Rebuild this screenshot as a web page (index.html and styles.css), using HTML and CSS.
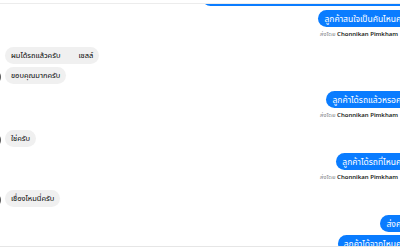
FILE: index.html
```html
<!DOCTYPE html>
<html>
<head lang="th">
    <meta charset="UTF-8">
    <title>แชท</title>
    <link rel="stylesheet" href="styles.css">
</head>
<body>
<div id="app">
    <div class="top"></div>
    <div class="thread">
        <div class="out">
            <div class="bubble blue first-cut">ลูกค้าสนใจรถรุ่นไหนเป็นพิเศษไหมคะ ทางเรามีหลายรุ่นเลยค่ะ</div>
            <div class="bubble blue m1">ลูกค้าสนใจเป็นคันไหนคะ</div>
            <div class="sent"><span class="lbl">ส่งโดย</span> <b>Chonnikan Pimkham</b></div>
        </div>

        <div class="in g1">
            <div class="row"><span class="avatar none"></span><div class="bubble grey">ผมได้รถแล้วครับ<span class="gap"></span>เซลล์</div></div>
            <div class="row"><span class="avatar"></span><div class="bubble grey">ขอบคุณมากครับ</div></div>
        </div>

        <div class="out g2">
            <div class="bubble blue">ลูกค้าได้รถแล้วหรอคะ</div>
            <div class="sent"><span class="lbl">ส่งโดย</span> <b>Chonnikan Pimkham</b></div>
        </div>

        <div class="in g3">
            <div class="row"><span class="avatar"></span><div class="bubble grey">ใช่ครับ</div></div>
        </div>

        <div class="out g4">
            <div class="bubble blue">ลูกค้าได้รถที่ไหนคะ</div>
            <div class="sent"><span class="lbl">ส่งโดย</span> <b>Chonnikan Pimkham</b></div>
        </div>

        <div class="in g5">
            <div class="row"><span class="avatar"></span><div class="bubble grey">เชื่องไหมนี่ครับ</div></div>
        </div>

        <div class="out g6">
            <div class="bubble blue">ส่งคะ</div>
            <div class="bubble blue m2">ลูกค้าได้จากไหนคะ</div>
        </div>
    </div>
    <div class="bottom"></div>
</div>
</body>
</html>
```

FILE: styles.css
```css
*{
    margin: 0;
    padding: 0;
    box-sizing: border-box;
}
html,body{
    overflow: hidden;
    background: #fff;
}
body{
    font-family: "Noto Sans", "Noto Sans Thai", "Liberation Sans", sans-serif;
    color: #050505;
}
#app{
    width: 400px;
    height: 250px;
    display: flex;
    flex-direction: column;
}
.top{
    height: 4px;
    border-bottom: 1px solid #ececec;
}
.bottom{
    height: 4px;
    border-top: 1px solid #e6e6e6;
}
.thread{
    flex: 1;
    width: 410px;
    overflow: hidden;
    display: flex;
    flex-direction: column;
}
.out{
    display: flex;
    flex-direction: column;
    align-items: flex-end;
}
.in{
    display: flex;
    flex-direction: column;
    align-items: flex-start;
    gap: 3px;
}
.row{
    display: flex;
    align-items: flex-end;
    gap: 4px;
}
.bubble{
    font-size: 7.5px;
    line-height: 9px;
    height: 17px;
    padding: 4px 6px;
    border-radius: 9px;
    white-space: nowrap;
}
.blue{
    background: #0a7cff;
    color: #fff;
    font-size: 8.5px;
}
.grey{
    background: #f0f0f0;
}
.gap{
    display: inline-block;
    width: 18px;
}
.first-cut{
    width: 208px;
    margin-top: -15px;
    border-radius: 9px 9px 4px 9px;
    overflow: hidden;
    color: transparent;
}
.m1{
    margin-top: 4px;
    border-top-right-radius: 4px;
}
.m2{
    margin-top: 3px;
    border-top-right-radius: 4px;
}
.sent{
    margin-top: 2px;
    font-size: 6px;
    line-height: 10px;
    padding-right: 12px;
    white-space: nowrap;
}
.sent .lbl{
    color: #8a8d91;
}
.sent b{
    color: #1c1e21;
    font-weight: 600;
}
.avatar{
    width: 14px;
    height: 14px;
    margin-left: -13px;
    border-radius: 50%;
    background: #5a5a5a;
    flex: none;
}
.avatar.none{
    background: transparent;
}
.g1{ margin-top: 8px; }
.g2{ margin-top: 7px; }
.g3{ margin-top: 10px; }
.g4{ margin-top: 6px; }
.g5{ margin-top: 8px; }
.g6{ margin-top: 8px; }
```
